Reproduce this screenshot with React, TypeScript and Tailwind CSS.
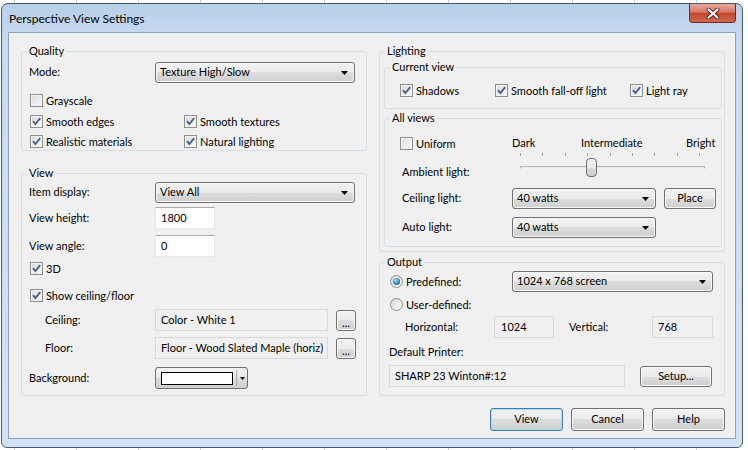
import { ReactNode } from "react";

const grad = "bg-[linear-gradient(#f2f2f2,#ebebeb_50%,#dddddd_50%,#cfcfcf)]";

function Check({ on }: { on?: boolean }) {
  return (
    <span className="w-[13px] h-[13px] shrink-0 border border-[#8e8f8f] bg-[linear-gradient(135deg,#d8dadd,#fbfbfb)] shadow-[inset_0_0_0_1px_#f4f4f4] flex items-center justify-center">
      {on && (
        <svg width="11" height="11" viewBox="0 0 11 11">
          <path d="M2 5.2 L4.4 8 L9.2 2.2" fill="none" stroke="#4d5f8c" strokeWidth="1.9" />
        </svg>
      )}
    </span>
  );
}

function CheckRow({ on, label, className = "" }: { on?: boolean; label: string; className?: string }) {
  return (
    <div className={`h-[15px] flex items-center gap-[3px] ${className}`}>
      <Check on={on} />
      <span className="leading-[15px] whitespace-nowrap">{label}</span>
    </div>
  );
}

function Radio({ on, label }: { on?: boolean; label: string }) {
  return (
    <div className="h-[15px] flex items-center gap-[3px]">
      <span className="w-[13px] h-[13px] rounded-full border border-[#8e8f8f] bg-[linear-gradient(135deg,#d6d8db,#fbfbfb)] flex items-center justify-center">
        {on && <span className="w-[7px] h-[7px] rounded-full bg-[radial-gradient(circle_at_40%_35%,#9fe0f5,#2a7fb0_60%,#1b5a8a)]" />}
      </span>
      <span className="leading-[15px] whitespace-nowrap">{label}</span>
    </div>
  );
}

function Arrow() {
  return (
    <svg width="7" height="4" viewBox="0 0 7 4">
      <polygon points="0,0 7,0 3.5,4" fill="#000" />
    </svg>
  );
}

function Select({ value, className = "" }: { value: string; className?: string }) {
  return (
    <div className={`h-[21px] shrink-0 border border-[#707070] rounded-[3px] ${grad} shadow-[inset_0_0_0_1px_#f8f8f8] flex items-center justify-between pl-[4px] pr-[6px] ${className}`}>
      <span className="whitespace-nowrap">{value}</span>
      <Arrow />
    </div>
  );
}

function Btn({ children, className = "", def }: { children: ReactNode; className?: string; def?: boolean }) {
  return (
    <div
      className={`h-[21px] shrink-0 flex items-center justify-center rounded-[3px] border ${grad} ${
        def ? "border-[#3c7fb1] shadow-[inset_0_0_0_1px_#a6dcf7]" : "border-[#707070] shadow-[inset_0_0_0_1px_#fbfbfb]"
      } ${className}`}
    >
      {children}
    </div>
  );
}

function Field({ value, className = "", edit }: { value: string; className?: string; edit?: boolean }) {
  return (
    <div
      className={`h-[22px] shrink-0 flex items-center border whitespace-nowrap ${
        edit ? "bg-white border-[#e3e9ef] border-t-[#abadb3] pl-[5px]" : "bg-[#f0f0f0] border-[#d9d9d9] pl-[5px]"
      } ${className}`}
    >
      {value}
    </div>
  );
}

function Group({ title, className = "", children }: { title: string; className?: string; children: ReactNode }) {
  return (
    <fieldset className={`border border-[#d5dfe5] rounded-[3px] min-w-0 ${className}`}>
      <legend className="ml-[5px] px-[2px] leading-[14px]">{title}</legend>
      {children}
    </fieldset>
  );
}

function Slider() {
  const ticks = [0, 1, 2, 3, 4, 5, 6, 7, 8];
  return (
    <div className="relative w-[204px] h-[28px]">
      <div className="absolute left-[8px] top-[1px] w-[180px] flex justify-between">
        {ticks.map((t) => (
          <span key={t} className="w-px h-[3px] bg-[#a0a0a0]" />
        ))}
      </div>
      <div className="absolute left-[8px] top-[14px] w-[185px] h-[3px] border border-[#b8b8b8] border-b-[#f4f4f4] bg-[#e6e6e6]" />
      <div className={`absolute left-[74px] top-[6px] w-[11px] h-[19px] border border-[#707070] rounded-[4px] ${grad}`} />
    </div>
  );
}

export default function App() {
  return (
    <div className="w-[748px] h-[450px] overflow-hidden bg-white bg-[repeating-linear-gradient(90deg,transparent_0_14px,#c9cdd4_14px_15px,transparent_15px_62px)] font-['Lato','Liberation_Sans',sans-serif] text-[12px] text-black pt-[3px] pl-[1px]">
      {/* window */}
      <div className="w-[742px] h-[445px] border border-[#48596f] rounded-t-[7px] rounded-b-[6px] bg-[linear-gradient(180deg,#b7cfe9,#c7dbf0_8%,#cddff3_60%,#d3e3f5)] px-[6px] pb-[8px] flex flex-col">
        <div className="h-[28px] flex justify-between items-start">
          <span className="pl-[1px] mt-[7px] leading-[15px]">Perspective View Settings</span>
          <div className="w-[47px] h-[19px] rounded-b-[4px] border border-t-0 border-[#6e2c24] bg-[linear-gradient(#eaa99b,#d77a64_45%,#c5452d_52%,#d06a50)] flex items-center justify-center">
            <svg width="14" height="11" viewBox="0 0 14 11">
              <path d="M2.5 1.5 L11.5 9.5 M11.5 1.5 L2.5 9.5" stroke="#5a2018" strokeWidth="4" strokeLinecap="round" />
              <path d="M2.5 1.5 L11.5 9.5 M11.5 1.5 L2.5 9.5" stroke="#fff" strokeWidth="2.2" strokeLinecap="round" />
            </svg>
          </div>
        </div>

        {/* client area */}
        <div className="w-[728px] h-[407px] border border-[#8ea3bd] bg-[#f0f0f0] text-[11px] pt-[11px] pl-[12px] pr-[10px] flex flex-col">
          <div className="grid grid-cols-[346px_346px] gap-x-[12px] items-start">
            {/* left column */}
            <div className="flex flex-col">
              <Group title="Quality" className="pb-[1px]">
                <div className="mt-[4px] h-[21px] flex items-center pl-[7px]">
                  <span className="w-[126px]">Mode:</span>
                  <Select className="w-[200px]" value="Texture High/Slow" />
                </div>
                <CheckRow className="mt-[10px] ml-[8px]" label="Grayscale" />
                <div className="mt-[6px] pl-[8px] grid grid-cols-[154px_1fr]">
                  <CheckRow on label="Smooth edges" />
                  <CheckRow on label="Smooth textures" />
                </div>
                <div className="mt-[5px] pl-[8px] grid grid-cols-[154px_1fr]">
                  <CheckRow on label="Realistic materials" />
                  <CheckRow on label="Natural lighting" />
                </div>
              </Group>

              <Group title="View" className="mt-[15px] pb-[6px]">
                <div className="mt-[2px] h-[21px] flex items-center pl-[7px]">
                  <span className="w-[126px]">Item display:</span>
                  <Select className="w-[200px]" value="View All" />
                </div>
                <div className="mt-[4px] h-[22px] flex items-center pl-[7px]">
                  <span className="w-[126px]">View height:</span>
                  <Field edit className="w-[60px]" value="1800" />
                </div>
                <div className="mt-[6px] h-[22px] flex items-center pl-[7px]">
                  <span className="w-[126px]">View angle:</span>
                  <Field edit className="w-[60px]" value="0" />
                </div>
                <CheckRow on className="mt-[4px] ml-[8px]" label="3D" />
                <CheckRow on className="mt-[12px] ml-[8px]" label="Show ceiling/floor" />
                <div className="mt-[6px] h-[22px] flex items-center pl-[23px]">
                  <span className="w-[110px]">Ceiling:</span>
                  <Field className="w-[173px]" value="Color - White 1" />
                  <Btn className="ml-[8px] w-[20px] leading-none pt-[6px] items-start">...</Btn>
                </div>
                <div className="mt-[6px] h-[22px] flex items-center pl-[23px]">
                  <span className="w-[110px]">Floor:</span>
                  <Field className="w-[173px]" value="Floor - Wood Slated Maple (horiz)" />
                  <Btn className="ml-[8px] w-[20px] leading-none pt-[6px] items-start">...</Btn>
                </div>
                <div className="mt-[8px] h-[22px] flex items-center pl-[7px]">
                  <span className="w-[126px]">Background:</span>
                  <div className={`w-[93px] h-[22px] border border-[#707070] rounded-[3px] ${grad} flex items-center pl-[5px]`}>
                    <div className="w-[72px] h-[13px] bg-white border border-black" />
                    <div className="ml-[3px] w-px h-[16px] bg-[#a8a8a8]" />
                    <svg className="ml-[3px]" width="5" height="3" viewBox="0 0 5 3">
                      <polygon points="0,0 5,0 2.5,3" fill="#000" />
                    </svg>
                  </div>
                </div>
              </Group>
            </div>

            {/* right column */}
            <div className="flex flex-col">
              <Group title="Lighting" className="pb-[4px]">
                <Group title="Current view" className="mt-[2px] ml-[4px] mr-[2px] pb-[10px]">
                  <div className="mt-[9px] pl-[15px] flex">
                    <CheckRow on className="w-[95px]" label="Shadows" />
                    <CheckRow on className="w-[135px]" label="Smooth fall-off light" />
                    <CheckRow on label="Light ray" />
                  </div>
                </Group>
                <Group title="All views" className="mt-[2px] ml-[4px] mr-[2px] pb-[8px]">
                  <div className="mt-[11px] pl-[15px] flex h-[15px] items-center">
                    <CheckRow className="w-[112px]" label="Uniform" />
                    <span className="w-[69px]">Dark</span>
                    <span className="w-[105px]">Intermediate</span>
                    <span>Bright</span>
                  </div>
                  <div className="mt-[1px] pl-[17px] flex">
                    <span className="w-[110px] mt-[12px] leading-[15px]">Ambient light:</span>
                    <Slider />
                  </div>
                  <div className="mt-[8px] h-[21px] flex items-center pl-[17px]">
                    <span className="w-[110px]">Ceiling light:</span>
                    <Select className="w-[144px]" value="40 watts" />
                    <Btn className="ml-[8px] w-[52px]">Place</Btn>
                  </div>
                  <div className="mt-[8px] h-[21px] flex items-center pl-[17px]">
                    <span className="w-[110px]">Auto light:</span>
                    <Select className="w-[144px]" value="40 watts" />
                  </div>
                </Group>
              </Group>

              <Group title="Output" className="mt-[3px] pb-[8px]">
                <div className="mt-[2px] h-[21px] flex items-center pl-[10px]">
                  <div className="w-[122px]">
                    <Radio on label="Predefined:" />
                  </div>
                  <Select className="w-[201px]" value="1024 x 768 screen" />
                </div>
                <div className="mt-[5px] pl-[10px]">
                  <Radio label="User-defined:" />
                </div>
                <div className="mt-[4px] h-[22px] flex items-center pl-[25px]">
                  <span className="w-[89px]">Horizontal:</span>
                  <Field className="w-[60px] pl-[6px]" value="1024" />
                  <span className="ml-[15px] w-[83px]">Vertical:</span>
                  <Field className="w-[61px]" value="768" />
                </div>
                <div className="mt-[7px] h-[15px] flex items-center pl-[9px]">Default Printer:</div>
                <div className="mt-[5px] h-[22px] flex items-center pl-[9px]">
                  <Field className="w-[236px]" value="SHARP 23 Winton#:12" />
                  <Btn className="ml-[15px] w-[72px]">Setup...</Btn>
                </div>
              </Group>
            </div>
          </div>

          <div className="mt-[12px] flex justify-end gap-[8px]">
            <Btn def className="w-[73px] h-[23px]">View</Btn>
            <Btn className="w-[73px] h-[23px]">Cancel</Btn>
            <Btn className="w-[73px] h-[23px]">Help</Btn>
          </div>
        </div>
      </div>
    </div>
  );
}
